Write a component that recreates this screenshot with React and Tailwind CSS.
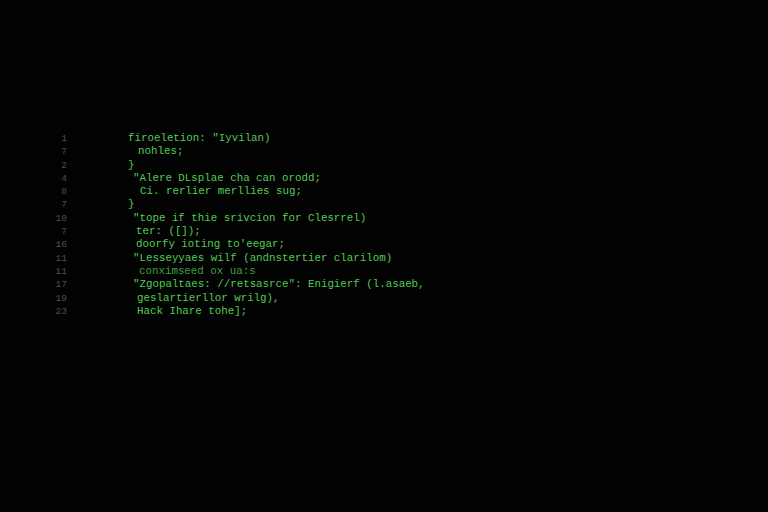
import React from "react";

const lines = [
  { n: "1", code: "firoeletion: \"Iyvilan)", pad: "pl-[0px]" },
  { n: "7", code: "nohles;", pad: "pl-[10px]" },
  { n: "2", code: "}", pad: "pl-[0px]" },
  { n: "4", code: "\"Alere DLsplae cha can orodd;", pad: "pl-[5px]" },
  { n: "8", code: "Ci. rerlier merllies sug;", pad: "pl-[12px]" },
  { n: "7", code: "}", pad: "pl-[0px]" },
  { n: "10", code: "\"tope if thie srivcion for Clesrrel)", pad: "pl-[5px]" },
  { n: "7", code: "ter: ([]);", pad: "pl-[8px]" },
  { n: "16", code: "doorfy ioting to'eegar;", pad: "pl-[8px]" },
  { n: "11", code: "\"Lesseyyaes wilf (andnstertier clarilom)", pad: "pl-[5px]" },
  { n: "11", code: "conximseed ox ua:s", pad: "pl-[11px]", dim: true },
  { n: "17", code: "\"Zgopaltaes: //retsasrce\": Enigierf (l.asaeb,", pad: "pl-[5px]" },
  { n: "19", code: "geslartierllor wrilg),", pad: "pl-[9px]" },
  { n: "23", code: "Hack Ihare tohe];", pad: "pl-[9px]" },
];

export default function App() {
  return (
    <div className="w-[768px] h-[512px] bg-[#020202] overflow-hidden pt-[132px] font-['Liberation_Mono',monospace] text-[10.8px] leading-[13.3px]">
      {lines.map((l, i) => (
        <div key={i} className="flex">
          <div className="w-[67px] text-right text-[#505050] text-[9.5px]">{l.n}</div>
          <div className="w-[61px]" />
          <div className={`${l.pad} whitespace-pre ${l.dim ? "text-[#3fa03f]" : "text-[#52cc52]"}`}>{l.code}</div>
        </div>
      ))}
    </div>
  );
}
